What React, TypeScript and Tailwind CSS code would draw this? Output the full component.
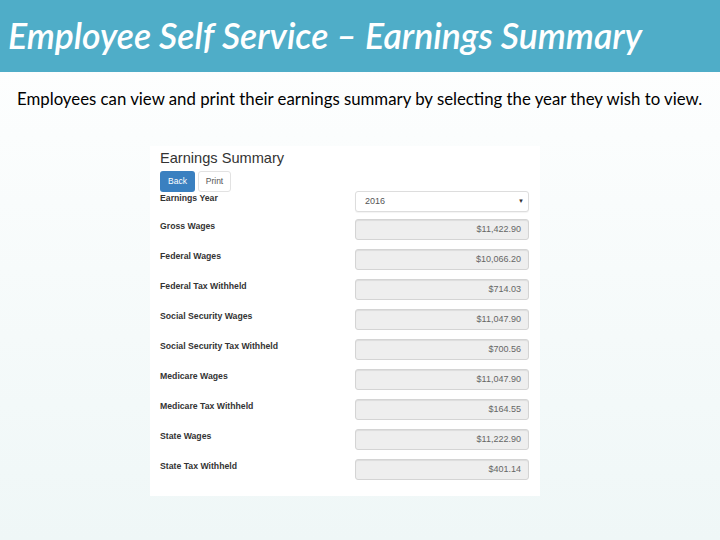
import React from "react";

const rows: { label: string; value: string }[] = [
  { label: "Gross Wages", value: "$11,422.90" },
  { label: "Federal Wages", value: "$10,066.20" },
  { label: "Federal Tax Withheld", value: "$714.03" },
  { label: "Social Security Wages", value: "$11,047.90" },
  { label: "Social Security Tax Withheld", value: "$700.56" },
  { label: "Medicare Wages", value: "$11,047.90" },
  { label: "Medicare Tax Withheld", value: "$164.55" },
  { label: "State Wages", value: "$11,222.90" },
  { label: "State Tax Withheld", value: "$401.14" },
];

const Row: React.FC<{ label: string; children: React.ReactNode }> = ({
  label,
  children,
}) => (
  <div className="flex h-[30px] items-start">
    <div className="w-[195px] pt-[1px] text-[8.7px] font-bold leading-[10px] text-[#333]">
      {label}
    </div>
    {children}
  </div>
);

export default function App() {
  return (
    <div className="flex h-[540px] w-[720px] flex-col bg-gradient-to-b from-white to-[#eff7f7] font-['Liberation_Sans',sans-serif]">
      <div className="flex h-[72px] items-center bg-[#4fadc8] pl-[8px]">
        <h1 className="font-['Lato',sans-serif] text-[35.6px] font-semibold italic text-white">
          Employee Self Service – Earnings Summary
        </h1>
      </div>
      <p className="mt-[16px] pl-[17px] font-['Lato',sans-serif] text-[16.8px] leading-[22px] text-black">
        Employees can view and print their earnings summary by selecting the year
        they wish to view.
      </p>
      <div className="ml-[150px] mt-[36px] h-[350px] w-[390px] bg-white pl-[10px] pr-[10px] pt-[3px]">
        <div className="text-[14.6px] leading-[18px] text-[#333]">Earnings Summary</div>
        <div className="mt-[4px] flex">
          <button className="h-[21px] w-[35px] rounded-[3px] bg-[#3a80c0] text-[8.5px] text-white">
            Back
          </button>
          <button className="ml-[3px] h-[21px] w-[33px] rounded-[3px] border border-[#e2e2e2] bg-white text-[8.5px] text-[#555]">
            Print
          </button>
        </div>
        <Row label="Earnings Year">
          <div className="-mt-[1px] flex h-[21px] w-[174px] items-center justify-between rounded-[3px] border border-[#ddd] bg-white pl-[9px] pr-[4px] text-[9px] text-[#555] shadow-[0_1px_1px_rgba(0,0,0,0.05)]">
            <span>2016</span>
            <span className="text-[6px] text-[#333]">▼</span>
          </div>
        </Row>
        <div className="-mt-[2px]">
          {rows.map((r) => (
            <Row key={r.label} label={r.label}>
              <div className="-mt-[1px] flex h-[21px] w-[174px] items-center justify-end rounded-[3px] border border-[#d4d4d4] bg-[#eeeeee] pr-[7px] text-[9px] text-[#666] shadow-[inset_0_1px_1px_rgba(0,0,0,0.075)]">
                {r.value}
              </div>
            </Row>
          ))}
        </div>
      </div>
    </div>
  );
}
